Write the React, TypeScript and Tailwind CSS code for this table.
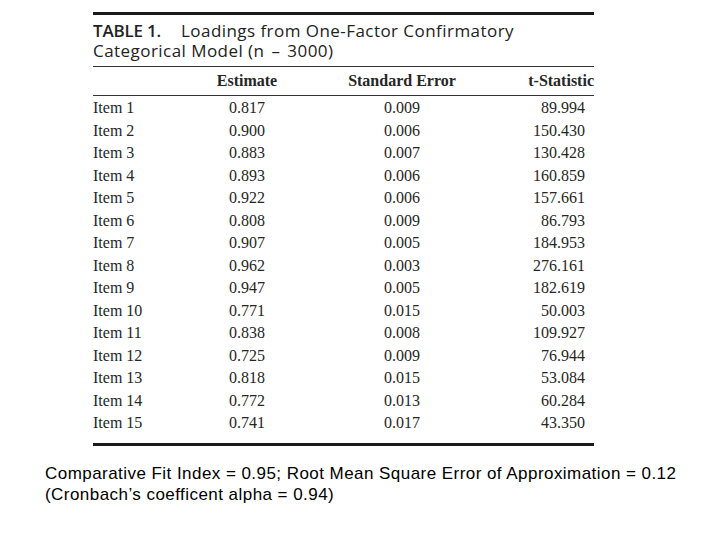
const rows: [string, string, string, string][] = [
  ["Item 1", "0.817", "0.009", "89.994"],
  ["Item 2", "0.900", "0.006", "150.430"],
  ["Item 3", "0.883", "0.007", "130.428"],
  ["Item 4", "0.893", "0.006", "160.859"],
  ["Item 5", "0.922", "0.006", "157.661"],
  ["Item 6", "0.808", "0.009", "86.793"],
  ["Item 7", "0.907", "0.005", "184.953"],
  ["Item 8", "0.962", "0.003", "276.161"],
  ["Item 9", "0.947", "0.005", "182.619"],
  ["Item 10", "0.771", "0.015", "50.003"],
  ["Item 11", "0.838", "0.008", "109.927"],
  ["Item 12", "0.725", "0.009", "76.944"],
  ["Item 13", "0.818", "0.015", "53.084"],
  ["Item 14", "0.772", "0.013", "60.284"],
  ["Item 15", "0.741", "0.017", "43.350"],
];

export default function App() {
  return (
    <div className="w-[720px] h-[540px] bg-white overflow-hidden">
      {/* table block */}
      <div className="ml-[93px] w-[501px] pt-[12px] text-[#262626]">
        <div className="border-t-[3px] border-[#1a1a1a]" />
        <div className="pt-[6px] pb-[5px] text-[17px] leading-[20px] tracking-[0.45px] font-['Open_Sans',sans-serif] text-[#222]">
          <div>
            <span className="font-semibold tracking-[-0.2px]">TABLE 1.</span>
            <span className="ml-[20px]">Loadings from One-Factor Confirmatory</span>
          </div>
          <div>
            Categorical Model (n<span className="mx-[7px]">–</span>3000)
          </div>
        </div>
        <div className="border-t border-[#333]" />
        <div className="flex items-center h-[28px] font-['Liberation_Serif',serif] text-[16px] font-bold">
          <div className="w-[119px]" />
          <div className="w-[70px] text-center">Estimate</div>
          <div className="w-[240px] text-center">Standard Error</div>
          <div className="w-[72px] text-right">t-Statistic</div>
        </div>
        <div className="border-t border-[#333]" />
        <div className="pt-[1px] font-['Liberation_Serif',serif] text-[16px]">
          {rows.map((r) => (
            <div key={r[0]} className="flex items-center h-[22.5px]">
              <div className="w-[119px]">{r[0]}</div>
              <div className="w-[70px] text-center">{r[1]}</div>
              <div className="w-[240px] text-center">{r[2]}</div>
              <div className="w-[72px] text-right pr-[9px]">{r[3]}</div>
            </div>
          ))}
        </div>
        <div className="mt-[8px] border-t-[3px] border-[#1a1a1a]" />
      </div>
      {/* footnote */}
      <div className="ml-[45px] mt-[17px] text-[17px] leading-[21px] tracking-[0.45px] font-['Liberation_Sans',Arial,sans-serif] text-black">
        <div>Comparative Fit Index = 0.95; Root Mean Square Error of Approximation = 0.12</div>
        <div>(Cronbach’s coefficent alpha = 0.94)</div>
      </div>
    </div>
  );
}
